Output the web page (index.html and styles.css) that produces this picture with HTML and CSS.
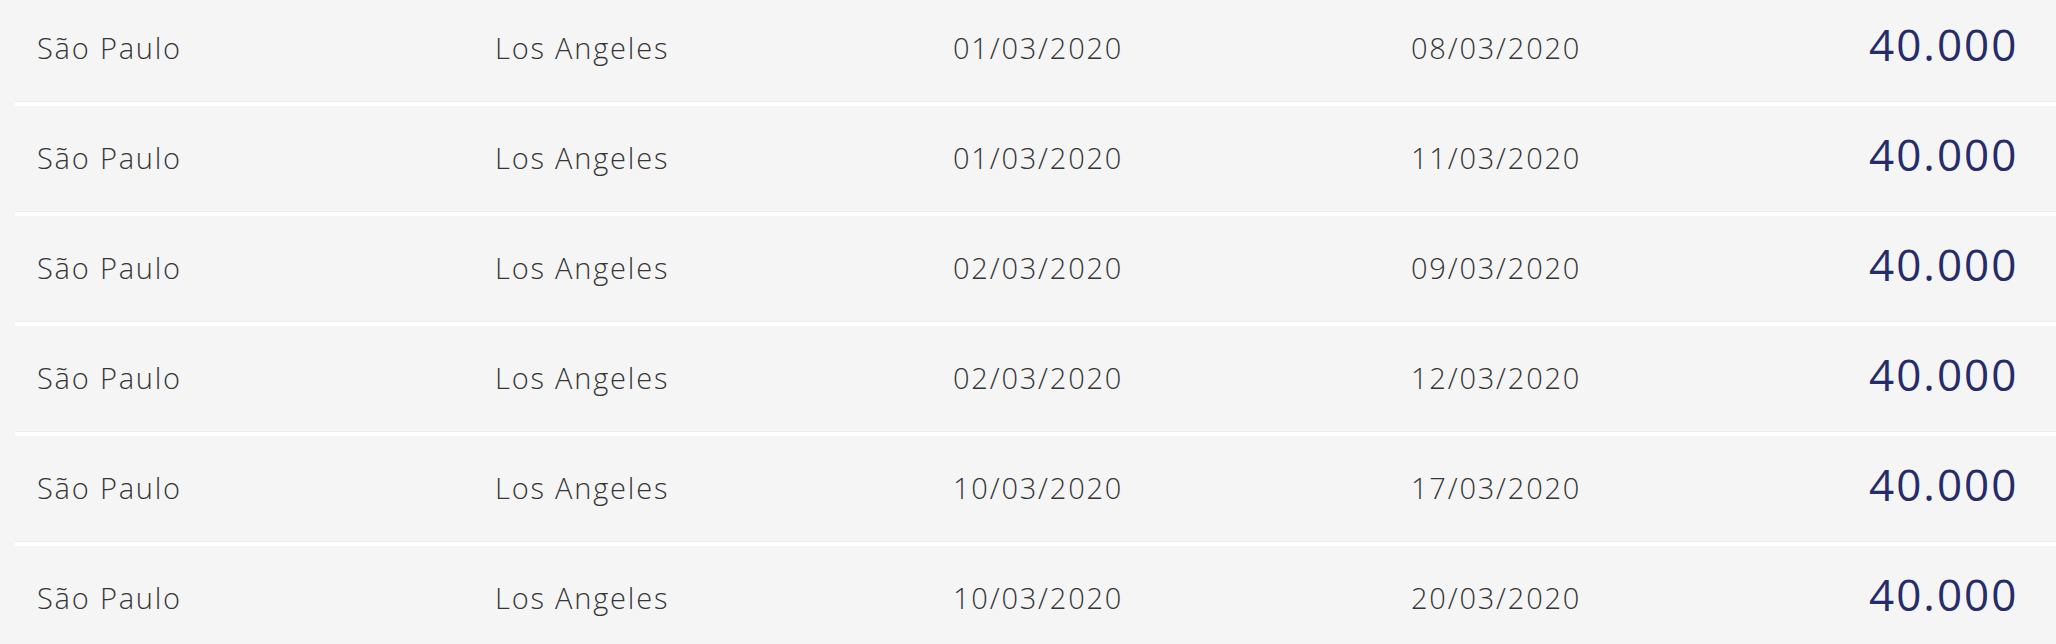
FILE: index.html
```html
<!DOCTYPE html>
<html lang="pt-BR">
<head>
    <meta charset="UTF-8">
    <meta name="viewport" content="width=device-width, initial-scale=1.0">
    <title>Voos</title>
    <link rel="stylesheet" href="styles.css">
</head>
<body>
    <div class="flight-list">
        <div class="flight-row">
            <span class="cell">São Paulo</span>
            <span class="cell">Los Angeles</span>
            <span class="cell">01/03/2020</span>
            <span class="cell">08/03/2020</span>
            <span class="cell points">40.000</span>
        </div>
        <div class="flight-row">
            <span class="cell">São Paulo</span>
            <span class="cell">Los Angeles</span>
            <span class="cell">01/03/2020</span>
            <span class="cell">11/03/2020</span>
            <span class="cell points">40.000</span>
        </div>
        <div class="flight-row">
            <span class="cell">São Paulo</span>
            <span class="cell">Los Angeles</span>
            <span class="cell">02/03/2020</span>
            <span class="cell">09/03/2020</span>
            <span class="cell points">40.000</span>
        </div>
        <div class="flight-row">
            <span class="cell">São Paulo</span>
            <span class="cell">Los Angeles</span>
            <span class="cell">02/03/2020</span>
            <span class="cell">12/03/2020</span>
            <span class="cell points">40.000</span>
        </div>
        <div class="flight-row">
            <span class="cell">São Paulo</span>
            <span class="cell">Los Angeles</span>
            <span class="cell">10/03/2020</span>
            <span class="cell">17/03/2020</span>
            <span class="cell points">40.000</span>
        </div>
        <div class="flight-row">
            <span class="cell">São Paulo</span>
            <span class="cell">Los Angeles</span>
            <span class="cell">10/03/2020</span>
            <span class="cell">20/03/2020</span>
            <span class="cell points">40.000</span>
        </div>
    </div>
</body>
</html>
```

FILE: styles.css
```css
body {
    font-family: "Open Sans", Lato, sans-serif;
    margin: 0;
    padding: 0;
    background-color: #f5f5f5;
    overflow: hidden;
}
.flight-list {
    margin: -4px 0 0 15px;
}
.flight-row {
    display: grid;
    grid-template-columns: 458px 458px 458px 458px 1fr;
    align-items: center;
    height: 106px;
    padding: 0 39px 0 22px;
    border-bottom: 4px solid #fff;
    box-shadow: inset 0 -1px 0 #ededed;
}
.cell {
    font-size: 29px;
    font-weight: 350;
    letter-spacing: 1.8px;
    color: #353535;
    white-space: nowrap;
    margin-top: -4px;
}
.points {
    text-align: right;
    font-size: 44px;
    font-weight: 400;
    letter-spacing: 2px;
    color: #262c6a;
    margin-top: -10px;
}
```
